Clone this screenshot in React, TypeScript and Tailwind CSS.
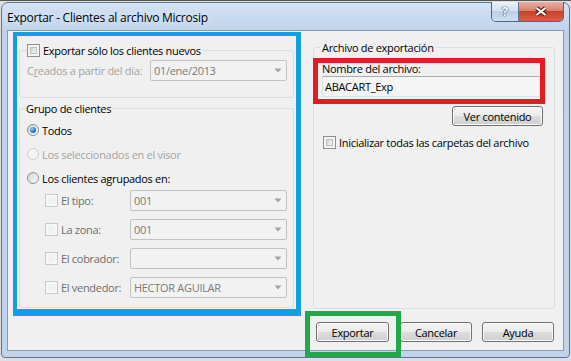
import React from 'react';

const CheckBox: React.FC<{ disabled?: boolean }> = ({ disabled = false }) => (
  <span
    className={`block w-[13px] h-[13px] shrink-0 border p-[2px] ${
      disabled ? 'border-[#c9c9c9] bg-[#f7f7f7]' : 'border-[#8e8f8f] bg-[#f4f4f4]'
    }`}
  >
    <span
      className={`block w-full h-full ${
        disabled ? 'bg-[#f1f1f1]' : 'bg-linear-to-br from-[#cfd2d6] to-[#f8f8f8] border border-[#b9bcc0]'
      }`}
    />
  </span>
);

const Radio: React.FC<{ checked?: boolean; disabled?: boolean }> = ({ checked = false, disabled = false }) => (
  <span
    className={`flex items-center justify-center w-[12px] h-[12px] shrink-0 rounded-full border ${
      disabled ? 'border-[#cdcdcd] bg-[#f4f4f4]' : 'border-[#8e8f8f] bg-linear-to-br from-[#d0d3d7] to-[#fbfbfb]'
    }`}
  >
    {checked && (
      <span className="block w-[6px] h-[6px] rounded-full bg-radial-[at_35%_30%] from-[#9fd0fa] via-[#2f7fd2] to-[#0b3f86]" />
    )}
  </span>
);

const Combo: React.FC<{ value?: string; className: string }> = ({ value = '', className }) => (
  <div
    className={`${className} h-[21px] shrink-0 flex items-center justify-between border border-[#c2c2c2] rounded-[2px] bg-[#f2f2f2] pl-[3px] pr-[4px] text-[#7b7b7b]`}
  >
    <span>{value}</span>
    <svg width="8" height="5" viewBox="0 0 8 5">
      <path d="M0.5 0.5 H7.5 L4 4.5 Z" fill="#a3a3a3" />
    </svg>
  </div>
);

const WinButton: React.FC<{ label: string; className: string }> = ({ label, className }) => (
  <div
    className={`${className} h-[20px] flex items-center justify-center rounded-[3px] border border-[#707070] bg-[linear-gradient(#f3f3f3,#ebebeb_50%,#dddddd_50%,#cfcfcf)] shadow-[inset_0_0_0_1px_#fbfbfb] text-black`}
  >
    {label}
  </div>
);

export default function App() {
  return (
    <div className="relative w-[571px] h-[361px] overflow-hidden bg-[#dedede] border-t border-[#555] pt-[1px] pl-[1px] font-['Open_Sans','Noto_Sans',sans-serif] text-[11px] leading-[15px] tracking-[-0.3px]">
      {/* ventana */}
      <div className="w-[569px] h-[356px] flex flex-col rounded-t-[7px] rounded-b-[4px] border border-[#5b7595] bg-[linear-gradient(#d4e3f5,#bed3eb_28px,#c0d5ec)] px-[5px] pb-[6px]">
        <div className="h-[27px] shrink-0 flex items-start justify-between">
          <span className="pt-[7px] text-[12px] tracking-[-0.25px] text-black [text-shadow:0_0_6px_#eef5fd]">
            Exportar - Clientes al archivo Microsip
          </span>
          <div className="-mt-[1px] flex h-[20px] w-[73px] overflow-hidden rounded-b-[5px] border border-t-0 border-[#4b6582]">
            <div className="w-[27px] flex items-center justify-center border-r border-[#5d7795] bg-[linear-gradient(#eaf1f9,#d3e1f1_45%,#bccfe6_50%,#cfdff1)] text-[13px] font-bold text-white [text-shadow:0_0_1px_#3c5068,0_0_1px_#3c5068,0_0_1px_#3c5068]">
              ?
            </div>
            <div className="flex-1 flex items-center justify-center bg-[linear-gradient(#eab0a3,#d98170_45%,#c6432a_50%,#d26244)]">
              <svg width="14" height="11" viewBox="0 0 14 11">
                <path d="M2.5 2 L11.5 9 M11.5 2 L2.5 9" stroke="#5e1a10" strokeWidth="4.2" />
                <path d="M2.5 2 L11.5 9 M11.5 2 L2.5 9" stroke="#ffffff" strokeWidth="2.2" />
              </svg>
            </div>
          </div>
        </div>

        {/* area cliente */}
        <div className="flex-1 flex flex-col border border-[#8a9bb1] bg-[#f0f0f0]">
          <div className="flex items-start">
            {/* columna izquierda */}
            <div className="ml-[5px] mt-[1px] w-[288px] h-[284px] flex flex-col border-t-4 border-l-4 border-r-[5px] border-b-[7px] border-[#12a0e3]">
              <fieldset className="mx-[2px] mt-[7px] pb-[16px] rounded-[3px] border border-[#d5dfe5]">
                <legend className="ml-[6px] px-[1px] flex items-center gap-[3px] text-black">
                  <CheckBox />
                  <span>Exportar sólo los clientes nuevos</span>
                </legend>
                <div className="mt-[2px] flex items-center pl-[7px] pr-[6px]">
                  <span className="flex-1 text-[#a3a3a3]">
                    C<span className="underline">r</span>eados a partir del día:
                  </span>
                  <Combo value="01/ene/2013" className="w-[137px]" />
                </div>
              </fieldset>

              <fieldset className="mx-[2px] mt-[3px] pb-[5px] rounded-[3px] border border-[#d5dfe5]">
                <legend className="ml-[4px] px-[2px] text-black">Grupo de clientes</legend>
                <div className="mt-[2px] flex flex-col">
                  <div className="h-[24px] flex items-center gap-[3px] pl-[7px] text-black">
                    <Radio checked />
                    <span>Todos</span>
                  </div>
                  <div className="h-[24px] flex items-center gap-[3px] pl-[7px] text-[#a3a3a3]">
                    <Radio disabled />
                    <span>Los seleccionados en el visor</span>
                  </div>
                  <div className="h-[24px] flex items-center gap-[3px] pl-[7px] text-black">
                    <Radio />
                    <span>Los clientes agrupados en:</span>
                  </div>
                </div>
                <div className="-mt-[4px] flex flex-col text-[#6d6d6d]">
                  {[
                    { label: 'El tipo:', value: '001' },
                    { label: 'La zona:', value: '001' },
                    { label: 'El cobrador:', value: '' },
                    { label: 'El vendedor:', value: 'HECTOR AGUILAR' },
                  ].map((row) => (
                    <div key={row.label} className="h-[29px] flex items-center pl-[25px] pr-[6px]">
                      <CheckBox disabled />
                      <span className="flex-1 pl-[3px]">{row.label}</span>
                      <Combo value={row.value} className="w-[157px]" />
                    </div>
                  ))}
                </div>
              </fieldset>
            </div>

            {/* columna derecha */}
            <fieldset className="ml-[12px] mt-[9px] w-[242px] h-[269px] flex flex-col rounded-[3px] border border-[#d5dfe5]">
              <legend className="ml-[6px] px-[2px] text-black">Archivo de exportación</legend>
              <div className="-ml-[1px] mt-[3px] w-[232px] h-[46px] flex flex-col border-[5px] border-[#e31b23] pl-[4px]">
                <span className="-mt-[1px] leading-[14px] text-black">Nombre del archivo:</span>
                <div className="h-[21px] flex items-center border border-[#dde2e8] border-t-[#abadb3] bg-[#f5f5f5] pl-[2px] text-black">
                  ABACART_Exp
                </div>
              </div>
              <WinButton label="Ver contenido" className="self-end mr-[11px] mt-[2px] w-[91px]" />
              <div className="mt-[9px] ml-[9px] flex items-center gap-[3px] text-black">
                <CheckBox />
                <span>Inicializar todas las carpetas del archivo</span>
              </div>
            </fieldset>
          </div>

          <div className="mt-[6px] flex justify-end pr-[9px]">
            <WinButton label="Exportar" className="w-[73px]" />
            <WinButton label="Cancelar" className="ml-[11px] w-[72px]" />
            <WinButton label="Ayuda" className="ml-[10px] w-[72px]" />
          </div>
        </div>
      </div>

      {/* marca verde sobre el botón Exportar */}
      <div className="absolute left-[305px] top-[310px] w-[96px] h-[46px] border-[5px] border-[#21a84a]" />
    </div>
  );
}
